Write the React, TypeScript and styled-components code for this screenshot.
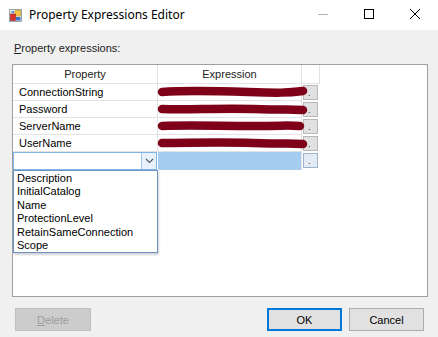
import styled, { createGlobalStyle } from "styled-components"

const GlobalStyle = createGlobalStyle`
    body {
        margin: 0;
        background: #f0f0f0;
        font-family: "Liberation Sans", Arial, sans-serif;
    }
`

const rows = [
    { name: "ConnectionString", wave: "M4 8 C 30 6, 60 7, 90 8 S 130 9, 145 7" },
    { name: "Password", wave: "M4 8 C 30 9, 60 7, 95 8 S 130 8, 145 9" },
    { name: "ServerName", wave: "M4 8 C 30 7, 60 8, 95 8 S 125 7, 142 8" },
    { name: "UserName", wave: "M4 8 C 30 8, 60 7, 95 8 S 130 8, 145 9" },
]

const options = [
    "Description",
    "InitialCatalog",
    "Name",
    "ProtectionLevel",
    "RetainSameConnection",
    "Scope",
]

const App = () => {
    return (
        <Window>
            <GlobalStyle />
            <TitleBar>
                <AppIcon />
                <Title>Property Expressions Editor</Title>
                <Controls>
                    <CtrlButton>
                        <svg width="12" height="12" viewBox="0 0 12 12">
                            <path d="M1 6.5 H11" stroke="#b5b5b5" strokeWidth="1" />
                        </svg>
                    </CtrlButton>
                    <CtrlButton>
                        <svg width="12" height="12" viewBox="0 0 12 12">
                            <rect x="1.5" y="1.5" width="9" height="9" fill="none" stroke="#000" strokeWidth="1" />
                        </svg>
                    </CtrlButton>
                    <CtrlButton>
                        <svg width="12" height="12" viewBox="0 0 12 12">
                            <path d="M1 1 L11 11 M11 1 L1 11" stroke="#000" strokeWidth="1" />
                        </svg>
                    </CtrlButton>
                </Controls>
            </TitleBar>

            <Content>
                <Label><u>P</u>roperty expressions:</Label>

                <Grid>
                    <HeaderRow>
                        <HeadCell $w={145}>Property</HeadCell>
                        <HeadCell $w={144}>Expression</HeadCell>
                        <HeadCell $w={18}></HeadCell>
                    </HeaderRow>

                    {rows.map((r) => (
                        <Row key={r.name}>
                            <NameCell>{r.name}</NameCell>
                            <ExprCell>
                                <Scribble viewBox="0 0 150 16" width="150" height="16">
                                    <path d={r.wave} stroke="#7f0019" strokeWidth="8.5" strokeLinecap="round" fill="none" />
                                </Scribble>
                            </ExprCell>
                            <BtnCell>
                                <Ellipsis>.</Ellipsis>
                            </BtnCell>
                        </Row>
                    ))}

                    <Row $tall>
                        <ComboCell>
                            <Combo>
                                <ComboArrow>
                                    <svg width="9" height="6" viewBox="0 0 9 6">
                                        <path d="M1 1 L4.5 4.5 L8 1" stroke="#556" strokeWidth="1.1" fill="none" />
                                    </svg>
                                </ComboArrow>
                                <DropList>
                                    {options.map((o) => (
                                        <DropItem key={o}>{o}</DropItem>
                                    ))}
                                </DropList>
                            </Combo>
                        </ComboCell>
                        <ExprCell $selected />
                        <BtnCell>
                            <Ellipsis $active>.</Ellipsis>
                        </BtnCell>
                    </Row>
                </Grid>

                <Footer>
                    <Button $disabled><u>D</u>elete</Button>
                    <Spacer />
                    <Button $primary>OK</Button>
                    <Button>Cancel</Button>
                </Footer>
            </Content>
        </Window>
    )
}

export default App

const AppIcon = () => (
    <svg width="13" height="13" viewBox="0 0 13 13">
        <rect x="0.5" y="0.5" width="12" height="12" fill="#e8e8e8" stroke="#9aa4b0" />
        <rect x="6" y="1.5" width="5.5" height="5.5" fill="#f5c542" stroke="#c79a1a" strokeWidth="0.6" />
        <rect x="1.5" y="5" width="5" height="6.5" fill="#d9302a" stroke="#9d1c18" strokeWidth="0.6" />
        <rect x="7" y="8" width="4.5" height="3.5" fill="#3f73c8" />
        <rect x="2.5" y="2" width="2.5" height="2" fill="#5a8fd8" />
    </svg>
)

const Window = styled.div`
    width: 438px;
    height: 337px;
    display: flex;
    flex-direction: column;
    background: #f0f0f0;
    overflow: hidden;
`

const TitleBar = styled.div`
    height: 30px;
    background: #fff;
    display: flex;
    align-items: center;
    padding-left: 9px;

    svg { display: block; }
`

const Title = styled.div`
    margin-left: 7px;
    font-family: "Noto Sans", "Open Sans", sans-serif;
    font-size: 12px;
    color: #000;
    flex: 1;
    padding-bottom: 2px;
`

const Controls = styled.div`
    display: flex;
    height: 30px;
`

const CtrlButton = styled.div`
    width: 46px;
    height: 30px;
    display: flex;
    align-items: center;
    justify-content: center;
    padding-bottom: 2px;
    box-sizing: border-box;
`

const Content = styled.div`
    flex: 1;
    display: flex;
    flex-direction: column;
    padding: 12px 10px 0 12px;
`

const Label = styled.div`
    font-size: 11px;
    line-height: 13px;
    color: #222;
    margin-left: 2px;
    margin-bottom: 9px;
`

const Grid = styled.div`
    height: 233px;
    box-sizing: border-box;
    border: 1px solid #a0a0a0;
    background: #fff;
    font-size: 11px;
    color: #000;
`

const HeaderRow = styled.div`
    display: flex;
    height: 19px;
`

const HeadCell = styled.div<{ $w: number }>`
    width: ${(p) => p.$w}px;
    box-sizing: border-box;
    border-right: 1px solid #e3e3e3;
    border-bottom: 1px solid #e3e3e3;
    display: flex;
    align-items: center;
    justify-content: center;
    color: #222;
`

const Row = styled.div<{ $tall?: boolean }>`
    display: flex;
    height: ${(p) => (p.$tall ? 18 : 17)}px;
`

const NameCell = styled.div`
    width: 145px;
    box-sizing: border-box;
    border-right: 1px solid #e3e3e3;
    border-bottom: 1px solid #e3e3e3;
    padding-left: 6px;
    display: flex;
    align-items: center;
`

const ExprCell = styled.div<{ $selected?: boolean }>`
    width: 144px;
    box-sizing: border-box;
    border-right: 1px solid #e3e3e3;
    border-bottom: 1px solid ${(p) => (p.$selected ? "#a6cdf0" : "#e3e3e3")};
    background: ${(p) => (p.$selected ? "#a6cdf0" : "#fff")};
    position: relative;
`

const Scribble = styled.svg`
    position: absolute;
    left: 0;
    top: 0;
    overflow: visible;
`

const BtnCell = styled.div`
    width: 18px;
    box-sizing: border-box;
    padding: 1px 0 0 1px;
`

const Ellipsis = styled.div<{ $active?: boolean }>`
    width: 15px;
    height: 15px;
    box-sizing: border-box;
    border: 1px solid ${(p) => (p.$active ? "#9cb3cc" : "#b8b8b8")};
    background: ${(p) => (p.$active ? "#e3ecf5" : "#e1e1e1")};
    font-size: 9px;
    line-height: 9px;
    color: #333;
    display: flex;
    align-items: flex-end;
    padding-left: 4px;
    padding-bottom: 1px;
`

const ComboCell = styled.div`
    width: 145px;
    box-sizing: border-box;
    position: relative;
`

const Combo = styled.div`
    position: relative;
    height: 18px;
    width: 144px;
    box-sizing: border-box;
    border: 1px solid #7eb4ea;
    background: #fff;
    display: flex;
    justify-content: flex-end;
`

const ComboArrow = styled.div`
    width: 15px;
    box-sizing: border-box;
    border-left: 1px solid #9cc4ee;
    background: #e8f1fa;
    display: flex;
    align-items: center;
    justify-content: center;
`

const DropList = styled.div`
    position: absolute;
    top: 17px;
    left: -1px;
    width: 145px;
    height: 83px;
    box-sizing: border-box;
    border: 1px solid #6f93c0;
    background: #fff;
    box-shadow: 1px 2px 2px rgba(0, 0, 0, 0.18);
    padding-top: 1px;
    z-index: 2;
`

const DropItem = styled.div`
    height: 13.4px;
    line-height: 13px;
    padding-left: 3px;
    font-size: 11px;
    color: #000;
`

const Footer = styled.div`
    display: flex;
    align-items: center;
    gap: 7px;
    padding: 11px 4px 0 3px;
`

const Spacer = styled.div`
    flex: 1;
`

const Button = styled.div<{ $primary?: boolean; $disabled?: boolean }>`
    width: ${(p) => (p.$disabled ? 76 : 75)}px;
    height: 23px;
    box-sizing: border-box;
    border: ${(p) => (p.$primary ? "2px solid #0078d7" : p.$disabled ? "1px solid #bfbfbf" : "1px solid #adadad")};
    background: ${(p) => (p.$disabled ? "#cccccc" : "#e1e1e1")};
    color: ${(p) => (p.$disabled ? "#9c9c9c" : "#000")};
    font-size: 11px;
    display: flex;
    align-items: center;
    justify-content: center;
`
